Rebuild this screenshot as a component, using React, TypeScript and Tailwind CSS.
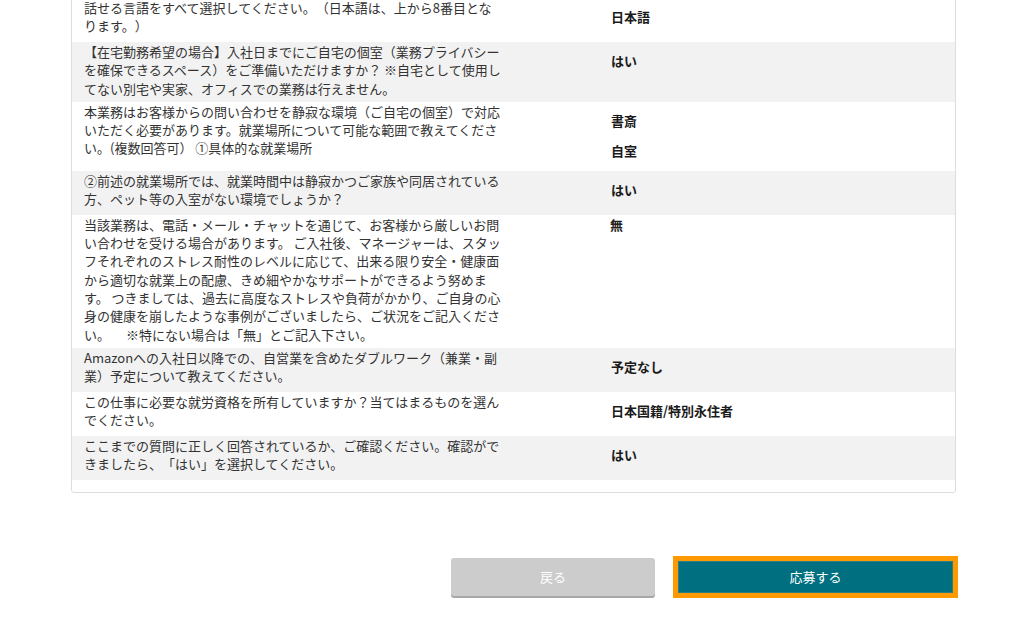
import React from 'react'

type Row = {
  lines: string[]
  answers: string[]
  free?: boolean
}

const ROWS: Row[] = [
  {
    lines: [
      '話せる言語をすべて選択してください。（日本語は、上から8番目とな',
      'ります。）',
    ],
    answers: ['日本語'],
  },
  {
    lines: [
      '【在宅勤務希望の場合】入社日までにご自宅の個室（業務プライバシー',
      'を確保できるスペース）をご準備いただけますか？ ※自宅として使用し',
      'てない別宅や実家、オフィスでの業務は行えません。',
    ],
    answers: ['はい'],
  },
  {
    lines: [
      '本業務はお客様からの問い合わせを静寂な環境（ご自宅の個室）で対応',
      'いただく必要があります。就業場所について可能な範囲で教えてくださ',
      'い。(複数回答可） ①具体的な就業場所',
    ],
    answers: ['書斎', '自室'],
  },
  {
    lines: [
      '②前述の就業場所では、就業時間中は静寂かつご家族や同居されている',
      '方、ペット等の入室がない環境でしょうか？',
    ],
    answers: ['はい'],
  },
  {
    lines: [
      '当該業務は、電話・メール・チャットを通じて、お客様から厳しいお問',
      'い合わせを受ける場合があります。 ご入社後、マネージャーは、スタッ',
      'フそれぞれのストレス耐性のレベルに応じて、出来る限り安全・健康面',
      'から適切な就業上の配慮、きめ細やかなサポートができるよう努めま',
      'す。 つきましては、過去に高度なストレスや負荷がかかり、ご自身の心',
      '身の健康を崩したような事例がございましたら、ご状況をご記入くださ',
      'い。 　※特にない場合は「無」とご記入下さい。',
    ],
    answers: ['無'],
    free: true,
  },
  {
    lines: [
      'Amazonへの入社日以降での、自営業を含めたダブルワーク（兼業・副',
      '業）予定について教えてください。',
    ],
    answers: ['予定なし'],
  },
  {
    lines: [
      'この仕事に必要な就労資格を所有していますか？当てはまるものを選ん',
      'でください。',
    ],
    answers: ['日本国籍/特別永住者'],
  },
  {
    lines: [
      'ここまでの質問に正しく回答されているか、ご確認ください。確認がで',
      'きましたら、「はい」を選択してください。',
    ],
    answers: ['はい'],
  },
]

function AnswerRow({ row, shaded }: { row: Row; shaded: boolean }) {
  return (
    <div
      className={`grid grid-cols-[433px_1fr] min-h-[44px] ${
        shaded ? 'bg-[#f2f2f2]' : 'bg-white'
      }`}
    >
      <div className="pl-3 pt-[1px] pb-[4px] text-[13px] leading-[18.3px] text-[#333333]">
        {row.lines.map((line, i) => (
          <span key={i} className="block whitespace-nowrap">
            {line}
          </span>
        ))}
      </div>
      {row.free ? (
        <div className="pl-[105px] pt-[1px] text-[13px] leading-[18.3px] font-semibold text-[#222222]">
          {row.answers[0]}
        </div>
      ) : (
        <div className="pl-[106px] pt-[9px] pb-[10px] flex flex-col gap-[10px]">
          {row.answers.map((a) => (
            <span
              key={a}
              className="text-[13px] leading-[20px] font-bold text-[#1a1a1a]"
            >
              {a}
            </span>
          ))}
        </div>
      )}
    </div>
  )
}

export default function App() {
  return (
    <div
      className="min-h-screen bg-white overflow-hidden [text-spacing-trim:space-all]"
      style={{ fontFamily: '"Noto Sans CJK JP", "Noto Sans", sans-serif' }}
    >
      <div className="ml-[71px] w-[885px] -mt-[3px] border border-[#dddddd] rounded-b-[3px] bg-white pb-[12px]">
        {ROWS.map((row, i) => (
          <AnswerRow key={i} row={row} shaded={i % 2 === 1} />
        ))}
      </div>

      <div className="mt-[63px] ml-[451px] flex items-center gap-[18px]">
        <button
          type="button"
          className="w-[204px] h-[38px] rounded-[3px] bg-[#cccccc] text-white text-[13px] shadow-[0_2px_0_#a8a8a8]"
        >
          戻る
        </button>
        <button
          type="button"
          className="w-[285px] h-[42px] border-[5px] border-[#ff9900] bg-[#007080] text-white text-[13px] shadow-[inset_0_0_0_1px_#2a7f86]"
        >
          応募する
        </button>
      </div>
    </div>
  )
}
